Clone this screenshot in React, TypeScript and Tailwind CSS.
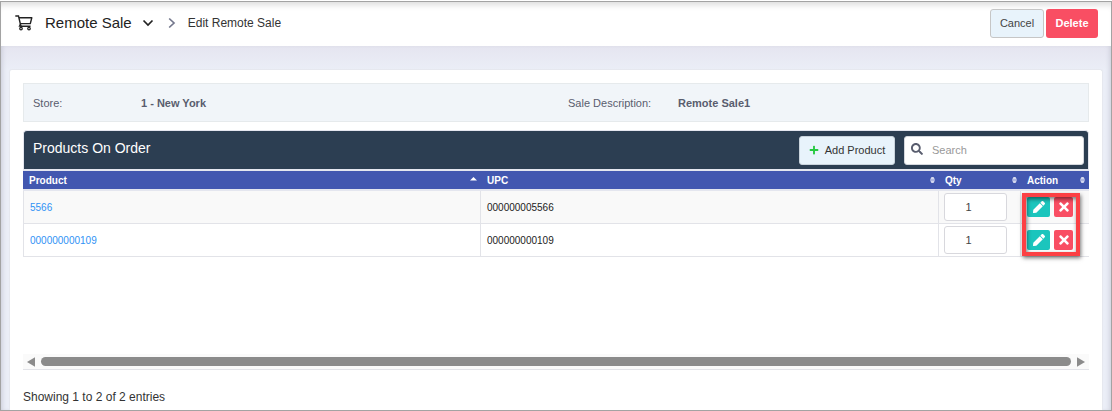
import { FaPen, FaPlus, FaSearch, FaTimes } from "react-icons/fa";

const columns = [
  { label: "Product", sort: "asc", width: "" },
  { label: "UPC", sort: "none", width: "" },
  { label: "Qty", sort: "none", width: "w-[82px]" },
  { label: "Action", sort: "none", width: "w-[68px]" },
];

const products = [
  { product: "5566", upc: "000000005566", qty: "1" },
  { product: "000000000109", upc: "000000000109", qty: "1" },
];

const CartIcon = () => (
  <svg viewBox="0 0 18 16" className="h-4 w-[18px]" fill="none" stroke="#222" aria-hidden="true">
    <path d="M0.3 1h3.2l2.4 10.2h9.6" strokeWidth="1.4" />
    <path d="M4 2.8h12.8l-1.5 5.8H5.4" strokeWidth="1.4" strokeLinejoin="round" />
    <path d="M5.6 8.8l-1.2 2.4h2" strokeWidth="1.2" />
    <circle cx="6" cy="13.6" r="1.3" strokeWidth="1.2" />
    <circle cx="14" cy="13.6" r="1.3" strokeWidth="1.2" />
  </svg>
);

const SortIcon = ({ sort }: { sort: string }) =>
  sort === "asc" ? (
    <svg viewBox="0 0 7 8" className="h-2 w-[7px]" fill="#fff" aria-hidden="true">
      <path d="M3.5 1L7 4.5H0z" />
    </svg>
  ) : (
    <svg viewBox="0 0 5 8" className="h-2 w-[5px]" fill="#d3d8ef" aria-hidden="true">
      <path d="M1.5 1h2L5 3.8H0zM0 4.2h5L3.5 7h-2z" />
    </svg>
  );

const Header = () => (
  <header className="flex h-11 items-center justify-between bg-white pr-[13px] pl-3.5 shadow-[inset_0_7px_6px_-4px_#ddd]">
    <nav className="flex items-center pb-0.5" aria-label="Breadcrumb">
      <CartIcon />
      <button type="button" className="ml-3 flex items-center gap-2.5 text-[15px] text-[#222]">
        Remote Sale
        <svg viewBox="0 0 12 8" className="h-2 w-3" fill="none" stroke="#222" strokeWidth="1.7" aria-hidden="true">
          <path d="M1.5 1.5L6 6l4.5-4.5" />
        </svg>
      </button>
      <svg viewBox="0 0 8 12" className="ml-3.5 h-3 w-2" fill="none" stroke="#74788d" strokeWidth="1.7" aria-hidden="true">
        <path d="M1.2 1.5L6 6l-4.8 4.5" />
      </svg>
      <span className="ml-3 text-xs text-[#333]">Edit Remote Sale</span>
    </nav>
    <div className="flex gap-0.5 pb-0.5">
      <button
        type="button"
        className="h-[29px] w-[54px] rounded-[3px] border border-[#c6c6c6] bg-[#e8f3fb] text-[11px] text-[#444]"
      >
        Cancel
      </button>
      <button type="button" className="h-[29px] w-[52px] rounded-[3px] bg-[#f94e63] text-[11px] font-bold text-white">
        Delete
      </button>
    </div>
  </header>
);

const SaleInfo = () => (
  <dl className="grid h-[39px] grid-cols-2 items-center border border-[#e6eaec] bg-[#f1f5f9] px-[9px] pt-0.5 text-[11px] text-[#595d6e]">
    <div className="flex">
      <dt className="w-[108px]">Store:</dt>
      <dd className="font-bold">1 - New York</dd>
    </div>
    <div className="flex pl-3">
      <dt className="w-[110px]">Sale Description:</dt>
      <dd className="font-bold">Remote Sale1</dd>
    </div>
  </dl>
);

const Toolbar = () => (
  <div className="mt-2 flex h-[41px] items-center justify-between rounded-t border border-b-2 border-[#e4e6ef] bg-[#2c3e52] pr-1 pl-[9px]">
    <h2 className="pb-1 text-sm text-white">Products On Order</h2>
    <div className="flex gap-[9px]">
      <button
        type="button"
        className="flex h-[29px] w-24 items-center justify-center gap-1.5 rounded-[3px] border border-[#c9d3dc] bg-[#e8f3fb] text-[11px] text-[#333]"
      >
        <FaPlus className="size-2.5 text-[#26c940]" />
        Add Product
      </button>
      <label className="flex h-[29px] w-[180px] items-center rounded-[3px] border border-[#d5d8de] bg-white pl-1.5">
        <FaSearch className="mb-0.5 size-3 shrink-0 text-[#595d6e]" />
        <input
          type="search"
          aria-label="Search"
          placeholder="Search"
          className="ml-[9px] w-full min-w-0 text-[11px] outline-none placeholder:text-[#999]"
        />
      </label>
    </div>
  </div>
);

const ProductTable = () => (
  <div className="relative min-h-[183px]">
    <table className="w-full table-fixed border-separate border-spacing-0 text-[10px] text-[#222]">
      <thead>
        <tr>
          {columns.map((col) => (
            <th
              key={col.label}
              aria-sort={col.sort === "asc" ? "ascending" : "none"}
              className={`h-5 border-b-2 border-[#e4e6ef] bg-[#4257b0] p-0 text-left font-bold text-white ${col.width}`}
            >
              <button type="button" className="flex w-full items-center justify-between pr-1 pl-1.5 font-bold">
                {col.label}
                <SortIcon sort={col.sort} />
              </button>
            </th>
          ))}
        </tr>
      </thead>
      <tbody>
        {products.map((row) => (
          <tr key={row.product} className="odd:bg-[#f9f9f9]">
            <td className="h-[33px] border-x border-b border-[#e2e3e8] p-0 pl-1.5">
              <a href="#" className="text-[#2f92f5]">
                {row.product}
              </a>
            </td>
            <td className="border-r border-b border-[#e2e3e8] p-0 pl-1.5">{row.upc}</td>
            <td className="border-r border-b border-[#e2e3e8] p-0 pl-[5px]">
              <input
                type="text"
                aria-label={`Quantity for ${row.product}`}
                defaultValue={row.qty}
                className="block h-7 w-[63px] rounded-[3px] border border-[#d8d8dd] bg-white pr-3.5 text-center text-[11px] text-[#444]"
              />
            </td>
            <td className="border-b border-[#e2e3e8] p-0 pl-1.5">
              <div className="flex gap-1">
                <button
                  type="button"
                  aria-label={`Edit ${row.product}`}
                  className="flex h-5 w-[23px] items-center justify-center rounded-[2px] bg-[#1bc5bd] text-white"
                >
                  <FaPen className="size-3" />
                </button>
                <button
                  type="button"
                  aria-label={`Remove ${row.product}`}
                  className="flex h-5 w-[19px] items-center justify-center rounded-[2px] bg-[#f94e63] text-white"
                >
                  <FaTimes className="size-3.5" />
                </button>
              </div>
            </td>
          </tr>
        ))}
      </tbody>
    </table>
    {/* callout around the row actions */}
    <div className="pointer-events-none absolute top-[22px] right-[9px] h-[63px] w-[58px] border-4 border-[#fc4044] shadow-[1px_2px_4px_#0008,inset_1px_2px_4px_#0008]" />
  </div>
);

const ScrollBar = () => (
  <div className="flex h-4 items-center gap-1.5 border-b border-[#e2e3e8] bg-[#fafafa] px-1">
    <svg viewBox="0 0 8 10" className="h-2.5 w-2" fill="#8b8b8b" aria-hidden="true">
      <path d="M8 0.3v9.4L0 5z" />
    </svg>
    <div className="h-[9px] flex-1 rounded-full bg-[#8b8b8b]" />
    <svg viewBox="0 0 8 10" className="h-2.5 w-2" fill="#8b8b8b" aria-hidden="true">
      <path d="M0 0.3v9.4L8 5z" />
    </svg>
  </div>
);

export default function App() {
  return (
    <div className="flex min-h-screen flex-col bg-white pt-px font-['Liberation_Sans',Arial,sans-serif]">
      <div className="flex flex-1 flex-col border border-[#a3a3a3] bg-[#ebedf6]">
        <Header />
        <main className="flex flex-1 flex-col bg-linear-to-b from-[#e5e5f0] to-[#ebeef7] to-[24px] px-2 pt-[23px] shadow-[inset_4px_0_5px_-3px_#c8cad6,inset_-4px_0_5px_-3px_#c8cad6]">
          <section className="flex-1 rounded-t-[3px] border-x border-t border-[#e6e8ef] bg-white px-[13px] pt-[13px]">
            <SaleInfo />
            <Toolbar />
            <ProductTable />
            <ScrollBar />
            <p className="pt-[19px] text-xs text-[#333]">Showing 1 to 2 of 2 entries</p>
          </section>
        </main>
      </div>
    </div>
  );
}
